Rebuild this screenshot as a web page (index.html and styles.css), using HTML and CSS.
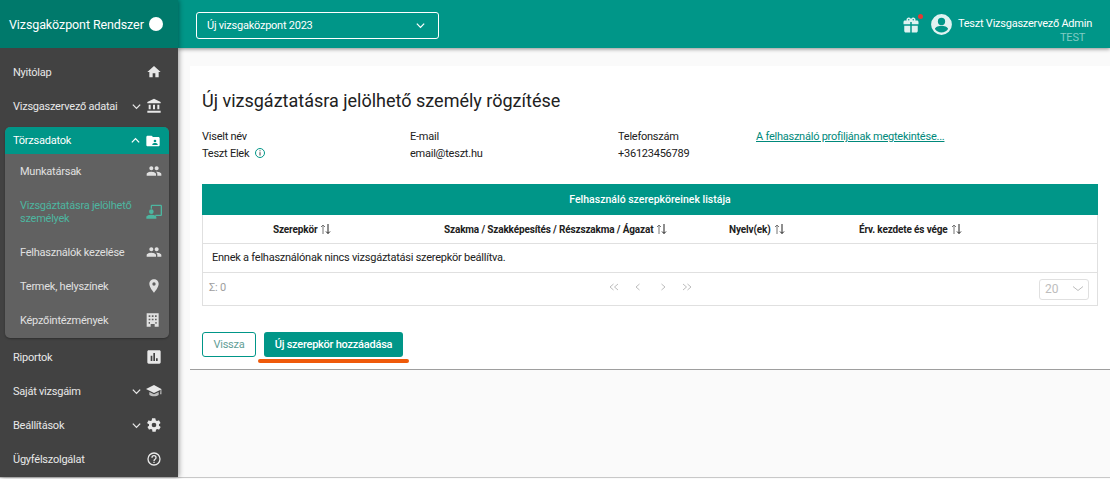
FILE: index.html
```html
<!DOCTYPE html>
<html lang="hu">
<head>
<meta charset="utf-8">
<title>Vizsgaközpont Rendszer</title>
<link rel="stylesheet" href="styles.css">
</head>
<body>
<div class="app">
  <aside class="sidebar">
    <div class="brand"><span class="brand-name">Vizsgaközpont Rendszer</span><span class="brand-dot"></span></div>
    <nav class="nav">
      <div class="item"><span class="label">Nyitólap</span><svg class="ico" viewBox="0 0 24 24"><path d="M10 20v-6h4v6h5v-8h3L12 3 2 12h3v8z"/></svg></div>
      <div class="item"><span class="label">Vizsgaszervező adatai</span><svg class="chev" viewBox="0 0 12 12"><path d="M2 4l4 4 4-4"/></svg><svg class="ico" viewBox="0 0 24 24"><path d="M4 10v7h3v-7zm6.500 0v7h3v-7zM2 22h20v-3H2zm15-12v7h3v-7zM12 1L2 6v2h20V6z"/></svg></div>
      <div class="group">
        <div class="item active"><span class="label">Törzsadatok</span><svg class="chev" viewBox="0 0 12 12"><path d="M2 8l4-4 4 4"/></svg><svg class="ico" viewBox="0 0 24 24"><path d="M20 6h-8l-2-2H4c-1.100 0-2 .9-2 2v12c0 1.100.9 2 2 2h16c1.100 0 2-.9 2-2V8c0-1.100-.9-2-2-2zm-5 4a2 2 0 1 1 0 4 2 2 0 0 1 0-4zm4 8h-8v-1c0-1.300 2.700-2 4-2s4 .7 4 2z"/></svg></div>
        <div class="sub"><span class="label">Munkatársak</span><svg class="ico" viewBox="0 0 24 24"><path d="M16 11c1.700 0 3-1.300 3-3s-1.300-3-3-3-3 1.300-3 3 1.300 3 3 3zm-8 0c1.700 0 3-1.300 3-3S9.700 5 8 5 5 6.300 5 8s1.300 3 3 3zm0 2c-2.300 0-7 1.200-7 3.500V19h14v-2.500C15 14.200 10.300 13 8 13zm8 0h-1c1.200.8 2 2 2 3.500V19h6v-2.500c0-2.300-4.700-3.500-7-3.500z"/></svg></div>
        <div class="sub sub-tall current"><span class="label">Vizsgáztatásra jelölhető személyek</span><svg class="ico" viewBox="0 0 24 24"><path d="M22 1H9c-1.100 0-2 .9-2 2v4h2V3h13v13h-8v2h8c1.100 0 2-.9 2-2V3c0-1.100-.9-2-2-2zM8 15a3.500 3.500 0 1 0 0-7 3.500 3.500 0 0 0 0 7zm0 1c-2.700 0-7.500 1.300-7.500 3.500V22h15v-2.500C15.500 17.300 10.700 16 8 16z"/></svg></div>
        <div class="sub"><span class="label">Felhasználók kezelése</span><svg class="ico" viewBox="0 0 24 24"><path d="M16 11c1.700 0 3-1.300 3-3s-1.300-3-3-3-3 1.300-3 3 1.300 3 3 3zm-8 0c1.700 0 3-1.300 3-3S9.700 5 8 5 5 6.300 5 8s1.300 3 3 3zm0 2c-2.300 0-7 1.200-7 3.500V19h14v-2.500C15 14.200 10.300 13 8 13zm8 0h-1c1.200.8 2 2 2 3.500V19h6v-2.500c0-2.300-4.700-3.500-7-3.500z"/></svg></div>
        <div class="sub"><span class="label">Termek, helyszínek</span><svg class="ico" viewBox="0 0 24 24"><path d="M12 2C8.100 2 5 5.100 5 9c0 5.200 7 13 7 13s7-7.800 7-13c0-3.900-3.100-7-7-7zm0 9.500a2.500 2.500 0 1 1 0-5 2.500 2.500 0 0 1 0 5z"/></svg></div>
        <div class="sub"><span class="label">Képzőintézmények</span><svg class="ico" viewBox="0 0 24 24"><path fill-rule="evenodd" d="M1 2h18v20h-6v-4H7v4H1zM4 5v2.500h2.500V5zm4.700 0v2.500h2.600V5zm4.800 0v2.500H16V5zM4 10v2.500h2.500V10zm4.700 0v2.500h2.600V10zm4.800 0v2.500H16V10zM4 15v2.500h2V15zm10 0v2.500h2V15z"/></svg></div>
      </div>
      <div class="item after-group"><span class="label">Riportok</span><svg class="ico" viewBox="0 0 24 24"><path fill-rule="evenodd" d="M4 2h16c1.100 0 2 .9 2 2v16c0 1.100-.9 2-2 2H4c-1.100 0-2-.9-2-2V4c0-1.100.9-2 2-2zm3 8v8h2.500v-8zm4-4v12h2.500V6zm4 8v4h2.500v-4z"/></svg></div>
      <div class="item"><span class="label">Saját vizsgáim</span><svg class="chev" viewBox="0 0 12 12"><path d="M2 4l4 4 4-4"/></svg><svg class="ico" viewBox="0 0 24 24"><path d="M12 3L0 9l12 6 10-5-.5 7h1.500V9z"/><path class="cap-band" d="M5 13.500v4.500c3 2.500 11 2.500 14 0v-4.500L12 17z"/></svg></div>
      <div class="item"><span class="label">Beállítások</span><svg class="chev" viewBox="0 0 12 12"><path d="M2 4l4 4 4-4"/></svg><svg class="ico" viewBox="0 0 24 24"><path fill-rule="evenodd" d="M19.400 13c.1-.3.1-.7.1-1s0-.7-.1-1l2.100-1.600c.2-.1.200-.4.100-.6l-2-3.500c-.1-.2-.4-.3-.6-.2l-2.500 1c-.5-.4-1.100-.7-1.700-1L14 2.400c0-.2-.2-.4-.5-.4h-4c-.2 0-.4.200-.5.400l-.4 2.700c-.6.200-1.200.6-1.700 1l-2.500-1c-.2-.1-.5 0-.6.200l-2 3.500c-.1.200-.1.500.1.600L4.600 11c0 .3-.1.700-.1 1s0 .7.1 1l-2.100 1.600c-.2.1-.2.400-.1.600l2 3.500c.1.200.4.300.6.200l2.500-1c.5.400 1.100.7 1.700 1l.4 2.700c0 .2.200.4.500.4h4c.2 0 .4-.2.500-.4l.4-2.700c.6-.2 1.200-.6 1.700-1l2.500 1c.2.1.5 0 .6-.2l2-3.500c.1-.2.1-.5-.1-.6zM12 15.500a3.500 3.500 0 1 1 0-7 3.500 3.500 0 0 1 0 7z"/></svg></div>
      <div class="item"><span class="label">Ügyfélszolgálat</span><svg class="ico" viewBox="0 0 24 24"><path fill-rule="evenodd" d="M12 2a10 10 0 1 0 0 20 10 10 0 0 0 0-20zm0 18a8 8 0 1 1 0-16 8 8 0 0 1 0 16zm-1-4h2v2h-2zm1-10a4 4 0 0 0-4 4h2a2 2 0 1 1 4 0c0 2-3 1.800-3 5h2c0-2.300 3-2.500 3-5a4 4 0 0 0-4-4z"/></svg></div>
    </nav>
  </aside>
  <div class="right">
    <header class="topbar">
      <div class="select"><span>Új vizsgaközpont 2023</span><svg class="chev select-chev" viewBox="0 0 12 12"><path d="M2 4l4 4 4-4"/></svg></div>
      <div class="user">
        <span class="gift">
          <svg viewBox="0 0 24 24"><path d="M20 6h-2.200c.1-.3.200-.7.200-1 0-1.700-1.300-3-3-3-1 0-1.900.5-2.500 1.300L12 4l-.5-.7C10.900 2.500 10 2 9 2 7.300 2 6 3.300 6 5c0 .3.100.7.200 1H4c-1.100 0-2 .9-2 2v3h9V8h2v3h9V8c0-1.100-.9-2-2-2zM9 6a1 1 0 1 1 0-2 1 1 0 0 1 0 2zm6 0a1 1 0 1 1 0-2 1 1 0 0 1 0 2zM3 13v7c0 1.100.9 2 2 2h6v-9zm10 0v9h6c1.100 0 2-.9 2-2v-7z"/></svg>
          <i class="badge"></i>
        </span>
        <svg class="avatar" viewBox="0 0 24 24"><path d="M12 2a10 10 0 1 0 0 20 10 10 0 0 0 0-20zm0 3.500a3.500 3.500 0 1 1 0 7 3.500 3.500 0 0 1 0-7zm0 14.200c-2.600 0-4.900-1.300-6.300-3.300 0-2.100 4.200-3.200 6.300-3.200s6.300 1.100 6.300 3.200c-1.400 2-3.700 3.300-6.300 3.300z"/></svg>
        <div class="user-text"><div class="user-name">Teszt Vizsgaszervező Admin</div><div class="user-org">TEST</div></div>
      </div>
    </header>
    <main class="main">
      <section class="card">
        <h1 class="title">Új vizsgáztatásra jelölhető személy rögzítése</h1>
        <div class="info">
          <div class="col-a"><div>Viselt név</div><div class="val">Teszt Elek <svg class="info-ico" viewBox="0 0 12 12"><circle cx="6" cy="6" r="4.500"/><path class="info-mark" d="M6 5.200v3.300M6 3.300v1"/></svg></div></div>
          <div class="col-b"><div>E-mail</div><div class="val">email@teszt.hu</div></div>
          <div class="col-c"><div>Telefonszám</div><div class="val">+36123456789</div></div>
          <a class="profile" href="#">A felhasználó profiljának megtekintése...</a>
        </div>
        <div class="table">
          <div class="table-title">Felhasználó szerepköreinek listája</div>
          <div class="thead">
            <div class="th th1">Szerepkör <svg class="sort" viewBox="0 0 11 12"><path class="up" d="M3 11V2M1 4l2-2 2 2"/><path d="M8 1v9.500M6 8.500l2 2 2-2"/></svg></div>
            <div class="th th2">Szakma / Szakképesítés / Részszakma / Ágazat <svg class="sort" viewBox="0 0 11 12"><path class="up" d="M3 11V2M1 4l2-2 2 2"/><path d="M8 1v9.500M6 8.500l2 2 2-2"/></svg></div>
            <div class="th th3">Nyelv(ek) <svg class="sort" viewBox="0 0 11 12"><path class="up" d="M3 11V2M1 4l2-2 2 2"/><path d="M8 1v9.500M6 8.500l2 2 2-2"/></svg></div>
            <div class="th th4">Érv. kezdete és vége <svg class="sort" viewBox="0 0 11 12"><path class="up" d="M3 11V2M1 4l2-2 2 2"/><path d="M8 1v9.500M6 8.500l2 2 2-2"/></svg></div>
          </div>
          <div class="empty">Ennek a felhasználónak nincs vizsgáztatási szerepkör beállítva.</div>
          <div class="tfoot">
            <span class="sum">Σ: 0</span>
            <div class="pager">
              <svg viewBox="0 0 10 8"><path d="M4.500 1L1 4l3.500 3M9 1L5.500 4 9 7"/></svg>
              <svg viewBox="0 0 10 8"><path d="M6.500 1L3 4l3.500 3"/></svg>
              <svg viewBox="0 0 10 8"><path d="M3.500 1L7 4 3.500 7"/></svg>
              <svg viewBox="0 0 10 8"><path d="M1 1l3.500 3L1 7M5.500 1L9 4 5.500 7"/></svg>
            </div>
            <div class="size"><span>20</span><svg class="size-chev" viewBox="0 0 12 8"><path d="M1 1.500l5 4 5-4"/></svg></div>
          </div>
        </div>
        <div class="actions">
          <button class="btn btn-outline">Vissza</button>
          <span class="btn-wrap"><button class="btn btn-fill">Új szerepkör hozzáadása</button><i class="underline"></i></span>
        </div>
      </section>
    </main>
  </div>
</div>
</body>
</html>
```
FILE: styles.css
```css
* { box-sizing: border-box; }
html, body { margin: 0; height: 100%; overflow: hidden; }
body { font-family: Roboto, "Liberation Sans", sans-serif; font-size: 11px; letter-spacing: -.24px; color: #212121; background: #fafafa; }
.app { display: flex; height: 477px; box-shadow: 0 1px 0 #c8c8c8; }

.sidebar { width: 178px; flex: none; background: #424242; color: #eee; box-shadow: 1px 0 5px rgba(0,0,0,.4); position: relative; z-index: 3; }
.brand { height: 48px; background: #00796b; display: flex; align-items: center; justify-content: space-between; padding: 0 15px 0 9px; color: #fff; font-size: 12.500px; letter-spacing: -.1px; white-space: nowrap; }
.brand-dot { width: 14px; height: 14px; border-radius: 50%; background: #fff; }
.nav { padding-top: 7px; display: flex; flex-direction: column; }
.item { height: 34px; display: flex; align-items: center; padding: 0 16px 0 13px; color: #e8e8e8; }
.label { flex: 1; }
.ico { width: 16px; height: 16px; fill: currentColor; flex: none; }
.cap-band { opacity: .75; }
.chev { width: 11px; height: 11px; fill: none; stroke: currentColor; stroke-width: 1.400; margin-right: 4px; flex: none; }
.group { margin: 4px 9px 0 5px; background: #616161; border-radius: 5px; overflow: hidden; box-shadow: 0 1px 2px rgba(0,0,0,.3); padding-bottom: 1px; }
.item.active { height: 27px; background: #009688; color: #fff; border-radius: 5px 5px 0 0; padding: 0 8px 0 8px; }
.after-group { margin-top: 2px; }
.sub { height: 34px; display: flex; align-items: center; padding: 0 7px 0 15px; color: #e0e0e0; }
.sub .label { line-height: 13px; }
.sub-tall { height: 47px; }
.current { color: #4db6a0; }
.current .label { padding-right: 8px; }

.right { flex: 1; min-width: 0; display: flex; flex-direction: column; }
.topbar { height: 48px; flex: none; background: #009688; display: flex; align-items: center; justify-content: space-between; padding: 0 18px; color: #fff; box-shadow: 0 1px 4px rgba(0,0,0,.45); position: relative; z-index: 2; }
.select { width: 243px; height: 27px; margin-top: 3px; border: 1px solid #fff; border-radius: 3px; display: flex; align-items: center; justify-content: space-between; padding: 0 8px 0 10px; }
.select-chev { margin-right: 4px; }
.user { display: flex; align-items: center; }
.gift { position: relative; width: 18px; height: 18px; display: block; margin: 1px 9px 0 0; }
.gift svg { width: 18px; height: 18px; fill: #e0f2f1; display: block; }
.badge { position: absolute; right: -3px; top: -2px; width: 5px; height: 5px; border-radius: 50%; background: #e53935; }
.avatar { width: 25px; height: 25px; fill: #e0f2f1; margin: 1px 4px 0 0; }
.user-text { text-align: right; padding-top: 14px; }
.user-name { line-height: 14px; }
.user-org { line-height: 14px; color: #80cbc4; margin-right: 7px; }

.main { flex: 1; padding: 18px 0 0 12px; }
.card { background: #fff; height: 304px; padding: 23px 12px 0; border-bottom: 1px solid #9e9e9e; }
.title { margin: 0; font-size: 18px; font-weight: 400; line-height: 24px; color: #212121; letter-spacing: 0; }
.info { display: flex; margin-top: 15px; line-height: 17px; height: 34px; }
.col-a { width: 208px; }
.col-b { width: 208px; }
.col-c { width: 138px; }
.profile { color: #00897b; text-decoration: underline; }
.info-ico { width: 12px; height: 12px; fill: none; stroke: #009688; stroke-width: 1; vertical-align: -2px; margin-left: 2px; }
.info-mark { stroke: #424242; }

.table { margin-top: 22px; border: 1px solid #e0e0e0; border-top: 0; }
.table-title { height: 31px; background: #009688; color: #fff; display: flex; align-items: center; justify-content: center; font-size: 10.500px; font-weight: 500; letter-spacing: 0; margin: 0 -1px; }
.thead { height: 29px; display: flex; align-items: center; border-bottom: 1px solid #e0e0e0; font-size: 10px; font-weight: 700; letter-spacing: -.15px; color: #212121; }
.th { white-space: nowrap; display: flex; align-items: center; gap: 3px; }
.th1 { margin-left: 70px; width: 171px; }
.th2 { width: 285px; }
.th3 { width: 130px; }
.sort { width: 11px; height: 12px; fill: none; stroke: #212121; stroke-width: 1; }
.sort .up { stroke: #757575; }
.empty { height: 29px; display: flex; align-items: center; padding: 0 0 1px 9px; border-bottom: 1px solid #e0e0e0; }
.tfoot { height: 32px; display: flex; align-items: center; position: relative; padding: 0 8px 0 6px; color: #9e9e9e; }
.sum { flex: 1; margin-bottom: 3px; }
.pager { position: absolute; left: 406px; top: 10px; display: flex; gap: 14.300px; }
.pager svg { width: 10px; height: 8px; fill: none; stroke: #bdbdbd; stroke-width: 1; }
.size { width: 50px; height: 21px; border: 1px solid #e0e0e0; border-radius: 3px; display: flex; align-items: center; justify-content: space-between; padding: 0 4px 0 5px; color: #bdbdbd; font-size: 12px; letter-spacing: 0; }
.size-chev { width: 12px; height: 8px; fill: none; stroke: #bdbdbd; stroke-width: 1; }

.actions { display: flex; gap: 8px; margin-top: 26px; align-items: flex-start; }
.btn { height: 25px; border-radius: 3px; font-family: inherit; font-size: 11px; letter-spacing: inherit; padding: 0; }
.btn-outline { width: 54px; background: #fff; border: 1px solid #009688; color: #5f9e96; }
.btn-fill { width: 139px; background: #009688; border: 0; color: #fff; display: block; font-weight: 500; }
.btn-wrap { position: relative; display: block; }
.underline { position: absolute; left: -6px; top: 27px; width: 151px; height: 4px; border-radius: 2px; background: #ef5a0a; }
```
